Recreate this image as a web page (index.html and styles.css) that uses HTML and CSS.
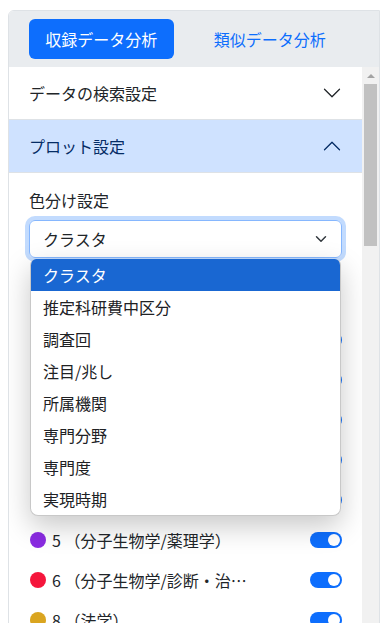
FILE: index.html
```html
<!DOCTYPE html>
<html lang="ja">
<head>
    <meta charset="utf-8">
    <title>データ分析</title>
    <meta name="viewport" content="width=device-width, initial-scale=1">
    <link rel="stylesheet" href="styles.css">
</head>
<body>
    <div class="panel">
        <div class="panel-head">
            <button class="tab active">収録データ分析</button>
            <button class="tab">類似データ分析</button>
        </div>

        <div class="panel-body">
            <div class="scroll-content">
                <div class="acc-item">
                    <button class="acc-btn">
                        <span>データの検索設定</span>
                        <svg class="acc-icon" viewBox="0 0 16 16"><path d="M1.646 4.646a.5.5 0 0 1 .708 0L8 10.293l5.646-5.647a.5.5 0 0 1 .708.708l-6 6a.5.5 0 0 1-.708 0l-6-6a.5.5 0 0 1 0-.708z"/></svg>
                    </button>
                </div>

                <div class="acc-item open">
                    <button class="acc-btn">
                        <span>プロット設定</span>
                        <svg class="acc-icon" viewBox="0 0 16 16"><path d="M1.646 4.646a.5.5 0 0 1 .708 0L8 10.293l5.646-5.647a.5.5 0 0 1 .708.708l-6 6a.5.5 0 0 1-.708 0l-6-6a.5.5 0 0 1 0-.708z"/></svg>
                    </button>
                    <div class="acc-body">
                        <div class="field-label">色分け設定</div>
                        <div class="select-wrap">
                            <div class="select">
                                <span>クラスタ</span>
                                <svg class="select-arrow" viewBox="0 0 16 16"><path d="M2 5l6 6 6-6"/></svg>
                            </div>
                            <!-- open native list -->
                            <ul class="dropdown">
                                <li class="selected">クラスタ</li>
                                <li>推定科研費中区分</li>
                                <li>調査回</li>
                                <li>注目/兆し</li>
                                <li>所属機関</li>
                                <li>専門分野</li>
                                <li>専門度</li>
                                <li>実現時期</li>
                            </ul>
                        </div>

                        <!-- rows 0-4 sit under the open list -->
                        <ul class="legend">
                            <li><span class="dot" style="background:#1f77b4"></span><span class="name"></span><span class="switch"></span></li>
                            <li><span class="dot" style="background:#ff7f0e"></span><span class="name"></span><span class="switch"></span></li>
                            <li><span class="dot" style="background:#2ca02c"></span><span class="name"></span><span class="switch"></span></li>
                            <li><span class="dot" style="background:#17becf"></span><span class="name"></span><span class="switch"></span></li>
                            <li><span class="dot" style="background:#8c564b"></span><span class="name"></span><span class="switch"></span></li>
                            <li><span class="dot" style="background:#8a2be2"></span><span class="name">5 （分子生物学/薬理学）</span><span class="switch"></span></li>
                            <li><span class="dot" style="background:#f5163c"></span><span class="name">6 （分子生物学/診断・治療）</span><span class="switch"></span></li>
                            <li><span class="dot" style="background:#daa520"></span><span class="name">8 （法学）</span><span class="switch"></span></li>
                        </ul>
                    </div>
                </div>
            </div>

            <div class="scrollbar">
                <div class="scroll-up"></div>
                <div class="scroll-thumb"></div>
            </div>
        </div>
    </div>
</body>
</html>
```

FILE: styles.css
```css
* {
    box-sizing: border-box;
}

html, body {
    height: 100%;
}

body {
    margin: 0;
    overflow: hidden;
    font-family: "Noto Sans CJK JP", "Noto Sans", sans-serif;
    font-size: 16px;
    line-height: 1.5;
    color: #212529;
    background: #fff;
}

.panel {
    margin: 10px 9px 0 8px;
    height: 720px;
    display: flex;
    flex-direction: column;
    border: 1px solid #dee2e6;
    border-radius: 6px 0 0 0;
    overflow: hidden;
}

.panel-head {
    display: grid;
    grid-template-columns: 1fr 1fr;
    gap: 24px;
    padding: 8px 37px 8px 20px;
    background: #e9ecef;
}

.tab {
    height: 40px;
    padding: 0 16px;
    border: none;
    border-radius: 6px;
    background: transparent;
    color: #0d6efd;
    font-family: inherit;
    font-size: 16px;
    cursor: pointer;
}

.tab.active {
    background: #0d6efd;
    color: #fff;
}

.panel-body {
    flex: 1;
    display: flex;
    min-height: 0;
    background: #fff;
}

.scroll-content {
    flex: 1;
    overflow: hidden;
}

/* fake classic scrollbar */
.scrollbar {
    width: 17px;
    display: flex;
    flex-direction: column;
    align-items: center;
    background: #f1f1f1;
}

.scroll-up {
    height: 17px;
    width: 100%;
    display: flex;
    align-items: center;
    justify-content: center;
}

.scroll-up::before {
    content: "";
    border-left: 4px solid transparent;
    border-right: 4px solid transparent;
    border-bottom: 4px solid #a3a3a3;
}

.scroll-thumb {
    width: 13px;
    height: 162px;
    background: #c1c1c1;
}

.acc-item {
    border-bottom: 1px solid #dee2e6;
}

.acc-btn {
    width: 100%;
    display: flex;
    align-items: center;
    justify-content: space-between;
    padding: 14px 20px;
    border: none;
    background: #fff;
    color: #212529;
    font-family: inherit;
    font-size: 16px;
    line-height: 1.5;
    text-align: left;
}

.acc-icon {
    width: 20px;
    height: 20px;
    fill: #212529;
}

.open .acc-btn {
    background: #cfe2ff;
    color: #052c65;
    border-bottom: 1px solid #dee2e6;
}

.open .acc-icon {
    fill: #052c65;
    transform: rotate(180deg);
}

.acc-body {
    padding: 15px 20px;
}

.field-label {
    margin-bottom: 8px;
}

.select-wrap {
    position: relative;
}

.select {
    height: 38px;
    display: flex;
    align-items: center;
    justify-content: space-between;
    padding: 0 12px 0 13px;
    border: 1px solid #86b7fe;
    border-radius: 6px;
    box-shadow: 0 0 0 4px rgba(13, 110, 253, 0.25);
}

.select-arrow {
    width: 16px;
    height: 12px;
    fill: none;
    stroke: #343a40;
    stroke-width: 2;
    stroke-linecap: round;
    stroke-linejoin: round;
}

.dropdown {
    position: absolute;
    top: 39px;
    left: 1px;
    right: 1px;
    z-index: 10;
    margin: 0;
    padding: 0;
    list-style: none;
    background: #fff;
    border: 1px solid #c8c8c8;
    border-top: none;
    border-radius: 6px 6px 8px 8px;
    overflow: hidden;
    box-shadow: 0 10px 28px rgba(0, 0, 0, 0.22);
}

.dropdown li {
    height: 32px;
    line-height: 32px;
    padding: 0 12px;
    color: #202124;
}

.dropdown li.selected {
    background: #1967d2;
    color: #fff;
}

.legend {
    margin: 62px 0 0;
    padding: 0;
    list-style: none;
}

.legend li {
    height: 40px;
    display: flex;
    align-items: center;
}

.dot {
    width: 16px;
    height: 16px;
    margin: 0 6px 0 1px;
    border-radius: 50%;
    flex-shrink: 0;
}

.name {
    max-width: 196px;
    white-space: nowrap;
    overflow: hidden;
    text-overflow: ellipsis;
}

.switch {
    position: relative;
    width: 32px;
    height: 16px;
    margin-left: auto;
    border-radius: 8px;
    background: #0d6efd;
}

.switch::after {
    content: "";
    position: absolute;
    top: 2px;
    right: 2px;
    width: 12px;
    height: 12px;
    border-radius: 50%;
    background: #fff;
}
```
